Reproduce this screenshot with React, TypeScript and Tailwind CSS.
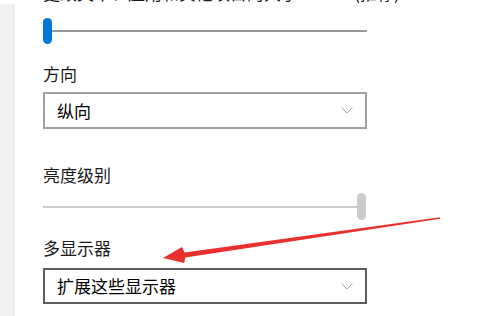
export default function App() {
  return (
    <div
      className="relative w-[490px] h-[316px] overflow-hidden bg-white flex"
      style={{ fontFamily: '"Noto Sans CJK SC", "Noto Sans", sans-serif' }}
    >
      {/* left nav strip */}
      <div className="mt-[4px] w-[15px] h-[312px] bg-[#f2f2f2] border-r-[3px] border-[#efefef]" />

      <div className="pl-[28px] flex flex-col text-[17px] text-[#1a1a1a]">
        <div className="mt-[-19px] h-[24px] leading-[24px] whitespace-nowrap">
          更改文本、应用和其他项目的大小: 100% (推荐)
        </div>

        {/* scale slider */}
        <div className="mt-[13px] h-[26px] w-[324px] flex items-center">
          <div className="w-[9px] h-[26px] rounded-full bg-[#0078d7]" />
          <div className="flex-1 h-[2px] bg-[#999999]" />
        </div>

        <div className="mt-[18px] h-[24px] leading-[24px]">方向</div>
        <Dropdown label="纵向" border="border-[#a0a0a0]" className="mt-[6px] h-[37px]" />

        <div className="mt-[34px] h-[24px] leading-[24px]">亮度级别</div>
        <div className="mt-[6px] h-[27px] w-[324px] flex items-center">
          <div className="flex-1 h-[2px] bg-[#cccccc]" />
          <div className="w-[9px] h-[27px] rounded-full bg-[#cccccc]" />
          <div className="w-[1px]" />
        </div>

        <div className="mt-[16px] h-[24px] leading-[24px]">多显示器</div>
        <Dropdown label="扩展这些显示器" border="border-[#5c5c5c]" className="mt-[8px] h-[36px]" />
      </div>

      {/* red annotation arrow */}
      <svg className="absolute inset-0" width="490" height="316" viewBox="0 0 490 316">
        <polygon
          points="163,258 181.9,247.1 184.6,252.4 440,217.3 440.2,218.8 185.4,257.6 184.1,262.9"
          fill="#e8312c"
        />
      </svg>
    </div>
  );
}

function Dropdown({ label, border, className }: { label: string; border: string; className: string }) {
  return (
    <div className={`w-[324px] border-2 ${border} bg-white flex items-center justify-between pl-[12px] pr-[12px] ${className}`}>
      <span className="text-[17px] text-black">{label}</span>
      <svg width="12" height="7" viewBox="0 0 12 7">
        <path d="M0.5 0.5 L6 6 L11.5 0.5" fill="none" stroke="#a8a8a8" strokeWidth="1" />
      </svg>
    </div>
  );
}
